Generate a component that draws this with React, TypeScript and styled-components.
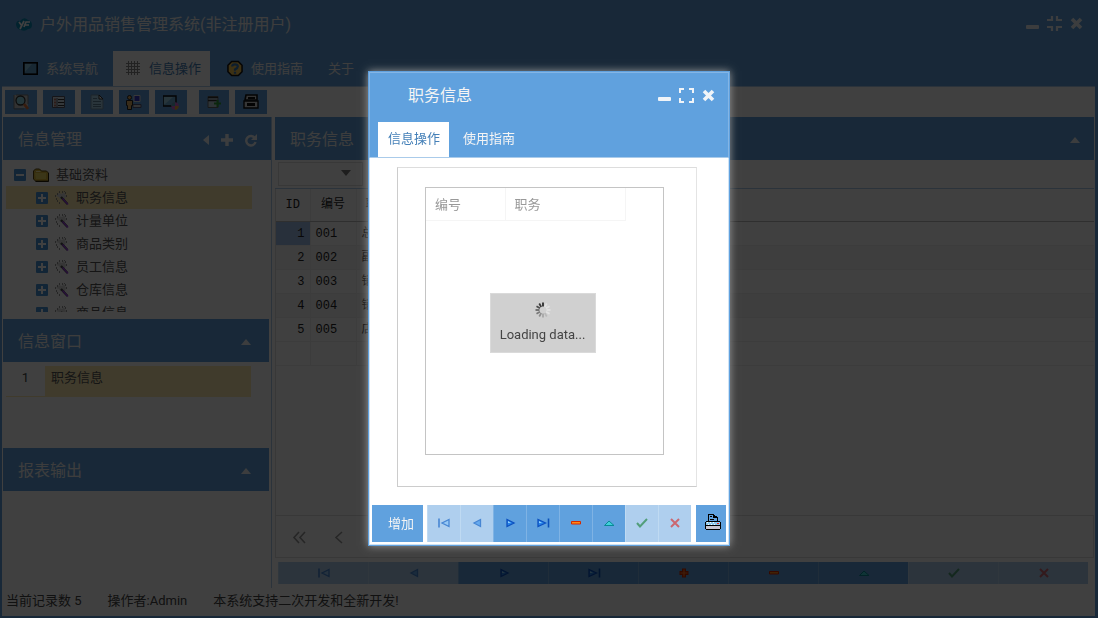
import React from "react";
import styled, { createGlobalStyle, css } from "styled-components";

const blue = "#60a1de";
const line = "#aacbea";
const highlight = "#ffebb0";
const sans = `Roboto, "Noto Sans CJK SC", sans-serif`;

const GlobalStyle = createGlobalStyle`
  *, *::before, *::after { box-sizing: border-box; }
  body { margin: 0; background: #fff; font: 13px/20px ${sans}; color: #444; }
  button, select { font: inherit; color: inherit; border: 0; padding: 0; background: none; }
  h1, h2, p, ul { margin: 0; padding: 0; font-weight: 400; }
  ul { list-style: none; }
  table { border-collapse: collapse; }
  th { font-weight: 400; text-align: left; }
  svg { display: block; flex: none; }
`;

const Page = styled.div`
  min-height: 100vh;
  display: flex;
  flex-direction: column;
  border: 2px solid ${blue};
  border-right-width: 3px;
`;

const TopBar = styled.header`
  background: ${blue};
  color: #f4f4f4;
  border-bottom: 1px solid ${line};
`;

const TitleRow = styled.div`
  display: flex;
  align-items: center;
  gap: 8px;
  height: 49px;
  padding: 0 11px 4px 14px;
`;

const AppTitle = styled.h1`
  flex: 1;
  font-size: 16px;
  line-height: 24px;
`;

const WindowTools = styled.div`
  display: flex;
  align-items: center;
  gap: 7px;
  padding-bottom: 2px;
`;

const IconButton = styled.button`
  display: grid;
  place-items: center;
  color: #f0f4f8;
`;

const Tabs = styled.nav`
  display: flex;
  height: 35px;
  padding-left: 8px;
`;

const Tab = styled.button<{ $active?: boolean; $left: number; $right: number }>`
  display: flex;
  align-items: center;
  gap: 8px;
  padding: 0 ${(p) => p.$right}px 0 ${(p) => p.$left}px;
  color: ${(p) => (p.$active ? "#4580b8" : "#f4f4f4")};
  background: ${(p) => (p.$active ? "#fff" : "transparent")};
`;

const ToolBar = styled.div`
  display: flex;
  gap: 6px;
  padding: 3px;
  height: 30px;
`;

const ToolButton = styled.button<{ $gap?: boolean; $narrow?: boolean }>`
  width: ${(p) => (p.$narrow ? 30 : 32)}px;
  height: 24px;
  display: grid;
  place-items: center;
  background: ${blue};
  margin-left: ${(p) => (p.$gap ? 6 : 0)}px;
`;

const Workspace = styled.main`
  flex: 1;
  display: flex;
  gap: 3px;
  padding: 0 1px;
`;

const Side = styled.aside`
  flex: none;
  width: 269px;
  display: flex;
  flex-direction: column;
  border-right: 1px solid ${line};
`;

const PanelHead = styled.div<{ $short?: boolean }>`
  display: flex;
  align-items: center;
  gap: 12px;
  height: 43px;
  margin-right: ${(p) => (p.$short ? 2 : 0)}px;
  padding: 2px ${(p) => (p.$short ? 18 : 14)}px 0 15px;
  background: ${blue};
  color: #f4f4f4;
`;

const PanelTitle = styled.h2`
  flex: 1;
  font-size: 16px;
  line-height: 24px;
`;

const PanelBody = styled.div<{ $height?: number }>`
  ${(p) => (p.$height ? css`height: ${p.$height}px;` : css`flex: 1;`)}
`;

const Tree = styled.ul`
  height: 152px;
  padding: 3px 19px 0 3px;
  overflow: hidden;
`;

const TreeRow = styled.li<{ $level: number; $on?: boolean }>`
  display: flex;
  align-items: center;
  gap: ${(p) => (p.$level ? 7 : 7)}px;
  height: 23px;
  padding-left: ${(p) => (p.$level ? 30 : 8)}px;
  background: ${(p) => (p.$on ? highlight : "transparent")};
  color: #555;
`;

const WindowList = styled.table`
  width: 245px;
  margin: 4px 0 0 3px;
  border-bottom: 1px solid ${highlight};
`;

const WindowNumber = styled.th`
  width: 39px;
  height: 30px;
  text-align: center;
  vertical-align: top;
  padding: 2px 0;
`;

const WindowName = styled.td`
  background: ${highlight};
  color: #555;
  vertical-align: top;
  padding: 2px 6px;
`;

const Content = styled.section`
  flex: 1;
  min-width: 0;
  display: flex;
  flex-direction: column;
`;

const FilterRow = styled.div`
  display: flex;
  height: 29px;
  padding: 2px 3px;
  border-bottom: 1px solid ${line};
`;

const Combo = styled.label`
  display: flex;
  align-items: center;
  width: 85px;
  padding: 0 11px 3px 0;
  border: 1px solid #ddd;
  color: #777;
`;

const ComboSelect = styled.select`
  flex: 1;
  min-width: 0;
  appearance: none;
`;

const GridArea = styled.div`
  flex: 1;
  border: solid #ddd;
  border-width: 0 0 0 1px;
`;

const GridTable = styled.table`
  width: 100%;
  table-layout: fixed;
  font: 12px/16px "Liberation Mono", "Noto Sans CJK SC", monospace;
  color: #222;
`;

const GridHead = styled.th`
  height: 32px;
  border-bottom: 1px solid #bbb;
  border-right: 1px solid #eee;
  text-align: center;
  &:last-child { text-align: left; padding-left: 9px; border-right: 0; }
`;

const GridRow = styled.tr<{ $alt?: boolean }>`
  height: 24px;
  background: ${(p) => (p.$alt ? "#f5f5f5" : "#fff")};
  border-bottom: 1px solid #f0f0f0;
`;

const GridCell = styled.td<{ $on?: boolean }>`
  padding: 2px 5px 0;
  border-right: 1px solid #eee;
  background: ${(p) => (p.$on ? "#a0bfe9" : "transparent")};
  &:first-child { text-align: right; }
  &:last-child { border-right: 0; }
`;

const Pager = styled.div`
  display: flex;
  align-items: center;
  gap: 28px;
  height: 43px;
  padding: 2px 0 0 16px;
  border: 1px solid #ddd;
  color: #999;
`;

const PagerButton = styled.button`
  display: grid;
  place-items: center;
`;

const NavBar = styled.div`
  display: flex;
  height: 22px;
  margin: 4px 6px 4px 3px;
`;

const NavButton = styled.button`
  flex: 1;
  display: grid;
  place-items: center;
  background: ${blue};
  border-left: 1px solid #7fb3e4;
  &:disabled { background: #afcfee; border-color: #bfdaf2; }
  &:disabled svg { opacity: 0.7; }
`;

const StatusBar = styled.footer`
  display: flex;
  gap: 26px;
  height: 28px;
  padding: 3px 4px;
`;

const Mask = styled.div`
  position: fixed;
  inset: 0;
  display: grid;
  place-items: center;
  padding-bottom: 2px;
  background: rgba(0, 0, 0, 0.75);
`;

const Dialog = styled.section`
  width: 362px;
  display: flex;
  flex-direction: column;
  background: #fff;
  border: 1px solid ${blue};
  box-shadow: 0 0 8px #999;
`;

const DialogTop = styled.div`
  background: ${blue};
  border: 1px solid #84b5e5;
  border-bottom-color: ${line};
`;

const DialogTitleRow = styled.div`
  display: flex;
  align-items: center;
  gap: 7px;
  height: 49px;
  padding: 0 12px 3px 38px;
  color: #f4f4f4;
`;

const DialogBody = styled.div`
  display: flex;
  flex-direction: column;
  padding: 9px 2px 2px;
  border: solid #cfe3f5;
  border-width: 0 1px 1px;
`;

const Frame = styled.div`
  height: 320px;
  margin: 0 29px 18px 25px;
  padding: 19px 32px 31px 27px;
  border: 1px solid #ccc;
  border-top-color: #ddd;
  border-right-color: #e4e4e4;
`;

const RecordGrid = styled.div`
  position: relative;
  height: 268px;
  border: 1px solid #c4c4c4;
`;

const RecordTable = styled.table`
  width: 199px;
  table-layout: fixed;
  color: #999;
`;

const RecordHead = styled.th<{ $width: number }>`
  width: ${(p) => p.$width}px;
  height: 33px;
  padding: 2px 0 0 9px;
  border: solid #f5f5f5;
  border-width: 0 1px 1px 0;
`;

const Loading = styled.div`
  position: absolute;
  inset: 4px 4px 0 0;
  display: grid;
  place-items: center;
`;

const LoadingBox = styled.div`
  display: flex;
  flex-direction: column;
  align-items: center;
  gap: 7px;
  width: 106px;
  padding: 8px 0 7px;
  background: #d0d0d0;
  border: 1px solid #dadada;
  line-height: 20px;
`;

const DialogActions = styled.div`
  display: flex;
  height: 37px;
`;

const AddButton = styled.button`
  width: 51px;
  padding: 2px 0 0 7px;
  background: ${blue};
  color: #f4f4f4;
`;

const DialogNav = styled.div`
  flex: 1;
  display: flex;
  margin: 0 5px 0 4px;
`;

const PrintButton = styled.button`
  width: 30px;
  display: grid;
  place-items: center;
  padding: 0 0 2px 3px;
  background: ${blue};
`;

const Minimize = () => (
  <svg width="15" height="15" viewBox="0 0 15 15"><rect x="1" y="9" width="13" height="4" rx="1" fill="currentColor" /></svg>
);
const Close = () => (
  <svg width="15" height="15" viewBox="0 0 15 15"><path d="M3 3l9 9M12 3l-9 9" stroke="currentColor" strokeWidth="3.600" /></svg>
);
const Expand = () => (
  <svg width="15" height="15" viewBox="0 0 15 15"><path d="M1 5V1h4M10 1h4v4M14 10v4h-4M5 14H1v-4" fill="none" stroke="currentColor" strokeWidth="2" /></svg>
);
const Compress = () => (
  <svg width="15" height="15" viewBox="0 0 15 15"><path d="M0 4h5V0M10 0v4h5M15 11h-5v4M5 15v-4H0" fill="none" stroke="currentColor" strokeWidth="2.200" /></svg>
);
const CaretUp = () => (
  <svg width="10" height="6" viewBox="0 0 10 6"><path d="M0 6L5 0l5 6z" fill="currentColor" /></svg>
);
const CaretDown = () => (
  <svg width="10" height="6" viewBox="0 0 10 6"><path d="M0 0h10L5 6z" fill="currentColor" /></svg>
);
const CaretLeft = () => (
  <svg width="6" height="10" viewBox="0 0 6 10"><path d="M6 0v10L0 5z" fill="currentColor" /></svg>
);
const Plus = () => (
  <svg width="12" height="12" viewBox="0 0 12 12"><path d="M6 0v12M0 6h12" stroke="currentColor" strokeWidth="3.400" /></svg>
);
const Reload = () => (
  <svg width="12" height="14" viewBox="0 0 12 14"><path d="M9.800 5A4.700 4.700 0 1 0 10.500 9" fill="none" stroke="currentColor" strokeWidth="2.400" /><path d="M12 1v6H6z" fill="currentColor" /></svg>
);
const Logo = () => (
  <svg width="16" height="16" viewBox="0 0 16 16">
    <path d="M0 7Q1 3 4 4Q8 -1 12 3Q16 4 16 8Q16 12 12 12Q9 15 5 13Q0 12 0 7z" fill="#0a8ab8" />
    <path d="M3 5l3 4M8 4l-4 8M8 10l2-5h4M9 8h4" stroke="#fff" strokeWidth="1.700" fill="none" />
  </svg>
);
const Screen = () => (
  <svg width="15" height="13" viewBox="0 0 15 13"><rect x=".8" y=".8" width="13.400" height="11.400" fill="#5f9fcc" stroke="#000" strokeWidth="1.600" /><path d="M2 2h7L2 10z" fill="#8cc6e4" /></svg>
);
const GridIcon = () => (
  <svg width="15" height="15" viewBox="0 0 15 15"><path d="M2.500 0v14M5.500 0v14M8.500 0v14M11.500 0v14M0 2.500h14M0 5.500h14M0 8.500h14M0 11.500h14" stroke="#888" /></svg>
);
const Help = () => (
  <svg width="16" height="17" viewBox="0 0 17 17">
    <path d="M5 1h7l4 4v7l-4 4H5l-4-4V5z" fill="#f2c14e" stroke="#111" strokeWidth="1.600" />
    <path d="M5.500 6.500q0-2.500 3-2.500T11.500 6.500q0 1.500-3 3v1.500M8.500 12v2" fill="none" stroke="#3577b8" strokeWidth="2.400" />
  </svg>
);
const Folder = () => (
  <svg width="16" height="14" viewBox="0 0 16 14"><path d="M.500 11V3l2-2h4l2 2h5l2 2v8h-13z" fill="#d9b838" stroke="#5c4a10" /><path d="M15.500 5v8.500h-13" fill="none" stroke="#2a2008" /><path d="M2 5h11v6H3z" fill="#ecd860" /><path d="M3 3h4l1 1H3z" fill="#fff2b0" /></svg>
);
const Toggle = ({ open }: { open?: boolean }) => (
  <svg width="12" height="12" viewBox="0 0 12 12"><rect width="12" height="12" rx="1" fill="#4a93d6" /><path d={open ? "M2 6h8" : "M2 6h8M6 2v8"} stroke="#fff" strokeWidth="2" /></svg>
);
const Wand = () => (
  <svg width="14" height="14" viewBox="0 0 14 14">
    <path d="M1 5l3-3 3 1 2-2 2 4-1 3-5 0-1-2z" fill="#d8d8d8" />
    <path d="M0 5h1M2 3h1M4 1h1M7 1h1M9 0h1M10 2h1M1 8h1M2 10h1M4 12h1M11 5h1" stroke="#777" strokeWidth="1.500" />
    <path d="M6 6l6.500 7" stroke="#444" strokeWidth="2.200" /><path d="M7.500 7.500l5.500 6" stroke="#a040e8" strokeWidth="1.300" />
  </svg>
);

const toolIcons: { name: string; gap?: boolean; narrow?: boolean; art: React.ReactNode }[] = [
  { name: "查找", art: <><path d="M1 1h14v13H1z" fill="#c8c8c8" /><path d="M1 1v14h10M3 1h12v9" fill="none" stroke="#777" /><circle cx="7.500" cy="6.500" r="4.500" fill="#8fd8e8" stroke="#333" strokeWidth="1.300" /><path d="M11 10l4 5" stroke="#d8703a" strokeWidth="2.800" /></> },
  { name: "列表", art: <><path d="M1.500 2.500h12v11h-12z" fill="#cfe0ec" stroke="#556" /><path d="M3 5.500h2M3 8.500h2M3 11.500h2" stroke="#b87060" strokeWidth="2" /><path d="M6 4v9" stroke="#556" /><path d="M7 5.500h6M7 8.500h6M7 11.500h6" stroke="#333" /></> },
  { name: "文档", art: <><path d="M2 1h8l4 4v10H2z" fill="#a4d0e8" stroke="#7090a8" /><path d="M10 1v4h4z" fill="#fff" stroke="#333" /><path d="M4 4.500h4M4 7.500h8M4 10.500h8M4 12.500h8" stroke="#5d8099" /></> },
  { name: "用户", narrow: true, art: <><path d="M8 1.500h6v6H8z" fill="#3b3bc8" stroke="#ddd" /><path d="M7 10.500h8v3H7z" fill="#ccc" stroke="#557" /><circle cx="3.500" cy="3.500" r="2" fill="#d9a45a" stroke="#222" /><path d="M.500 6.500h6v5h-1v4h-4v-4h-1z" fill="#e4b064" stroke="#222" /></> },
  { name: "显示", art: <><path d="M0 2h13v10H0z" fill="#6cacd4" stroke="#111" strokeWidth="1.400" /><path d="M1 3h9l-8 7H1z" fill="#a0d4e8" /><circle cx="12" cy="12" r="3.700" fill="#d46ad0" /><path d="M12 12h3.700a3.700 3.700 0 0 1-3.700 3.700z" fill="#e8b03a" /><path d="M12 12H8.300A3.700 3.700 0 0 1 12 8.300z" fill="#54a8b8" /></> },
  { name: "导出", gap: true, narrow: true, art: <><path d="M2 2.500h10v11H2z" fill="#b8cdd8" stroke="#666" /><path d="M2 3.500h10M2 6.500h10" stroke="#333" strokeWidth="1.400" /><path d="M8 9.500h7M11.500 6v7" stroke="#2f9b3b" strokeWidth="2" /></> },
  { name: "打印", art: <><path d="M3 1h11v5H2z" fill="#d0d0d0" stroke="#111" strokeWidth="1.600" /><path d="M5 4h7" stroke="#111" strokeWidth="2" /><path d="M1 7h14v7H1z" fill="#d8d8d8" stroke="#111" strokeWidth="1.400" /><path d="M4 10.500h8" stroke="#111" strokeWidth="3" /></> },
];

const navItems: Record<string, { name: string; art: React.ReactNode }> = {
  first: { name: "第一条", art: <><path d="M3 3.500v9" stroke="#1c68c8" strokeWidth="1.600" /><path d="M13 4.500v7L6 8z" fill="#8cc6f8" stroke="#1c68c8" strokeWidth="1.300" /></> },
  prev: { name: "上一条", art: <path d="M11.500 4.500v7L5 8z" fill="#4a9df0" stroke="#1c68c8" strokeWidth="1.300" /> },
  next: { name: "下一条", art: <><path d="M5 4.500v7L12 8z" fill="#2a86ea" stroke="#0b50c0" strokeWidth="1.300" /><path d="M6 6l3 2H6z" fill="#8fd0ff" /></> },
  last: { name: "最后一条", art: <><path d="M13.500 3.500v9" stroke="#0b50b8" strokeWidth="1.600" /><path d="M3 4.500v7L10.500 8z" fill="#2a86ea" stroke="#0b50c0" strokeWidth="1.300" /><path d="M4 6l3 2H4z" fill="#8fd0ff" /></> },
  insert: { name: "插入", art: <><path d="M8 3.500v9M3.500 8h9" stroke="#c42a00" strokeWidth="4" /><path d="M8 4.500v7M4.500 8h7" stroke="#ff7a2a" strokeWidth="1.200" /></> },
  remove: { name: "删除", art: <path d="M3.500 6.500h9v2.500h-9z" fill="#ff8a1a" stroke="#d42a00" /> },
  edit: { name: "编辑", art: <path d="M3.500 10.500h9.500L8 6z" fill="#3fd0d8" stroke="#088a96" /> },
  save: { name: "保存", art: <path d="M3 8l3 3.500 7-7.500" fill="none" stroke="#2c8a4a" strokeWidth="2" /> },
  cancel: { name: "取消", art: <path d="M4 4l8 8M12 4l-8 8" fill="none" stroke="#d83c3c" strokeWidth="2" /> },
};

const disabledItems = ["first", "prev", "save", "cancel"];

const NavButtons = ({ keys }: { keys: string[] }) => (
  <>
    {keys.map((key) => (
      <NavButton key={key} aria-label={navItems[key].name} disabled={disabledItems.includes(key)}>
        <svg width="16" height="16" viewBox="0 0 16 16">{navItems[key].art}</svg>
      </NavButton>
    ))}
  </>
);

const treeItems = ["职务信息", "计量单位", "商品类别", "员工信息", "仓库信息", "商品信息"];
const positions = ["总", "副", "销", "销", "店"];

const Printer = () => (
  <svg width="16" height="16" viewBox="0 0 16 16" shapeRendering="crispEdges">
    <path d="M3 0h1v8H3zM4 0h5v1H4zM9 1h1v2H9zM10 2h2v1h-2zM12 3h1v5h-1zM5 2h2v1H5zM5 5h4v1H5zM8 1h1v3H8zM8 3h4v1H8z" fill="#000" />
    <path d="M1 7h14v1H1zM0 8h1v7H0zM15 8h1v7h-1zM0 11h16v1H0zM1 15h14v1H1z" fill="#000" />
    <path d="M1 8h14v3H1z" fill="#8ecbf0" /><path d="M2 8h1v1H2zM5 8h1v1H5zM8 8h1v1H8zM3 10h1v1H3zM6 10h1v1H6zM9 10h1v1H9z" fill="#fff" />
    <path d="M1 12h14v3H1z" fill="#c8c8d4" /><path d="M12 9h2v1h-2z" fill="#f02020" />
  </svg>
);

const Spinner = () => (
  <svg width="16" height="16" viewBox="0 0 16 16">
    {Array.from({ length: 12 }, (_, i) => (
      <path key={i} d="M8 0.500v4" stroke={i > 0 && i < 5 ? "#fff" : "#222"} strokeWidth="1.700" opacity={i === 0 ? 1 : i < 5 ? 0.4 : (i - 4) / 8} transform={`rotate(${i * 30} 8 8)`} />
    ))}
  </svg>
);

export default function App() {
  return (
    <>
      <GlobalStyle />
      <Page>
        <TopBar>
          <TitleRow>
            <Logo />
            <AppTitle>户外用品销售管理系统(非注册用户)</AppTitle>
            <WindowTools>
              <IconButton aria-label="最小化"><Minimize /></IconButton>
              <IconButton aria-label="还原"><Compress /></IconButton>
              <IconButton aria-label="关闭"><Close /></IconButton>
            </WindowTools>
          </TitleRow>
          <Tabs>
            <Tab $left={13} $right={15}><Screen />系统导航</Tab>
            <Tab $left={13} $right={9} $active><GridIcon />信息操作</Tab>
            <Tab $left={17} $right={12}><Help />使用指南</Tab>
            <Tab $left={13} $right={12}>关于</Tab>
          </Tabs>
        </TopBar>
        <ToolBar>
          {toolIcons.map((t) => (
            <ToolButton key={t.name} aria-label={t.name} $gap={t.gap} $narrow={t.narrow}>
              <svg width="16" height="16" viewBox="0 0 16 16">{t.art}</svg>
            </ToolButton>
          ))}
        </ToolBar>
        <Workspace>
          <Side>
            <PanelHead>
              <PanelTitle>信息管理</PanelTitle>
              <IconButton aria-label="收起"><CaretLeft /></IconButton>
              <IconButton aria-label="添加"><Plus /></IconButton>
              <IconButton aria-label="刷新"><Reload /></IconButton>
            </PanelHead>
            <PanelBody $height={159}>
              <Tree>
                <TreeRow $level={0}><Toggle open /><Folder />基础资料</TreeRow>
                {treeItems.map((name, i) => (
                  <TreeRow key={name} $level={1} $on={i === 0}><Toggle /><Wand />{name}</TreeRow>
                ))}
              </Tree>
            </PanelBody>
            <PanelHead $short>
              <PanelTitle>信息窗口</PanelTitle>
              <IconButton aria-label="折叠信息窗口"><CaretUp /></IconButton>
            </PanelHead>
            <PanelBody $height={86}>
              <WindowList>
                <tbody><tr><WindowNumber scope="row">1</WindowNumber><WindowName>职务信息</WindowName></tr></tbody>
              </WindowList>
            </PanelBody>
            <PanelHead $short>
              <PanelTitle>报表输出</PanelTitle>
              <IconButton aria-label="折叠报表输出"><CaretUp /></IconButton>
            </PanelHead>
            <PanelBody />
          </Side>
          <Content>
            <PanelHead>
              <PanelTitle>职务信息</PanelTitle>
              <IconButton aria-label="折叠职务信息"><CaretUp /></IconButton>
            </PanelHead>
            <FilterRow>
              <Combo><ComboSelect aria-label="筛选" /><CaretDown /></Combo>
            </FilterRow>
            <GridArea>
              <GridTable>
                <colgroup><col style={{ width: 34 }} /><col style={{ width: 46 }} /><col /></colgroup>
                <thead><tr><GridHead>ID</GridHead><GridHead>编号</GridHead><GridHead>职务</GridHead></tr></thead>
                <tbody>
                  {positions.map((name, i) => (
                    <GridRow key={i} $alt={i % 2 === 1}>
                      <GridCell $on={i === 0}>{i + 1}</GridCell><GridCell>{`00${i + 1}`}</GridCell><GridCell>{name}</GridCell>
                    </GridRow>
                  ))}
                  <GridRow><GridCell /><GridCell /><GridCell /></GridRow>
                </tbody>
              </GridTable>
            </GridArea>
            <Pager>
              <PagerButton aria-label="首页"><svg width="14" height="13" viewBox="0 0 14 13"><path d="M7 1L2 6.500 7 12M13 1L8 6.500 13 12" fill="none" stroke="currentColor" strokeWidth="1.600" /></svg></PagerButton>
              <PagerButton aria-label="上一页"><svg width="9" height="13" viewBox="0 0 9 13"><path d="M8 1L2 6.500 8 12" fill="none" stroke="currentColor" strokeWidth="1.600" /></svg></PagerButton>
            </Pager>
            <NavBar>
              <NavButtons keys={["first", "prev", "next", "last", "insert", "remove", "edit", "save", "cancel"]} />
            </NavBar>
          </Content>
        </Workspace>
        <StatusBar>
          <p>当前记录数 5</p>
          <p>操作者:Admin</p>
          <p>本系统支持二次开发和全新开发!</p>
        </StatusBar>
      </Page>
      <Mask>
        <Dialog role="dialog" aria-labelledby="dialog-title">
          <DialogTop>
            <DialogTitleRow>
              <PanelTitle id="dialog-title">职务信息</PanelTitle>
              <IconButton aria-label="最小化窗口"><Minimize /></IconButton>
              <IconButton aria-label="最大化窗口"><Expand /></IconButton>
              <IconButton aria-label="关闭窗口"><Close /></IconButton>
            </DialogTitleRow>
            <Tabs>
              <Tab $left={10} $right={9} $active>信息操作</Tab>
              <Tab $left={14} $right={14}>使用指南</Tab>
            </Tabs>
          </DialogTop>
          <DialogBody>
            <Frame>
              <RecordGrid>
                <RecordTable>
                  <thead><tr><RecordHead $width={79}>编号</RecordHead><RecordHead $width={120}>职务</RecordHead></tr></thead>
                </RecordTable>
                <Loading><LoadingBox role="status"><Spinner />Loading data...</LoadingBox></Loading>
              </RecordGrid>
            </Frame>
            <DialogActions>
              <AddButton>增加</AddButton>
              <DialogNav>
                <NavButtons keys={["first", "prev", "next", "last", "remove", "edit", "save", "cancel"]} />
              </DialogNav>
              <PrintButton aria-label="打印记录"><Printer /></PrintButton>
            </DialogActions>
          </DialogBody>
        </Dialog>
      </Mask>
    </>
  );
}
